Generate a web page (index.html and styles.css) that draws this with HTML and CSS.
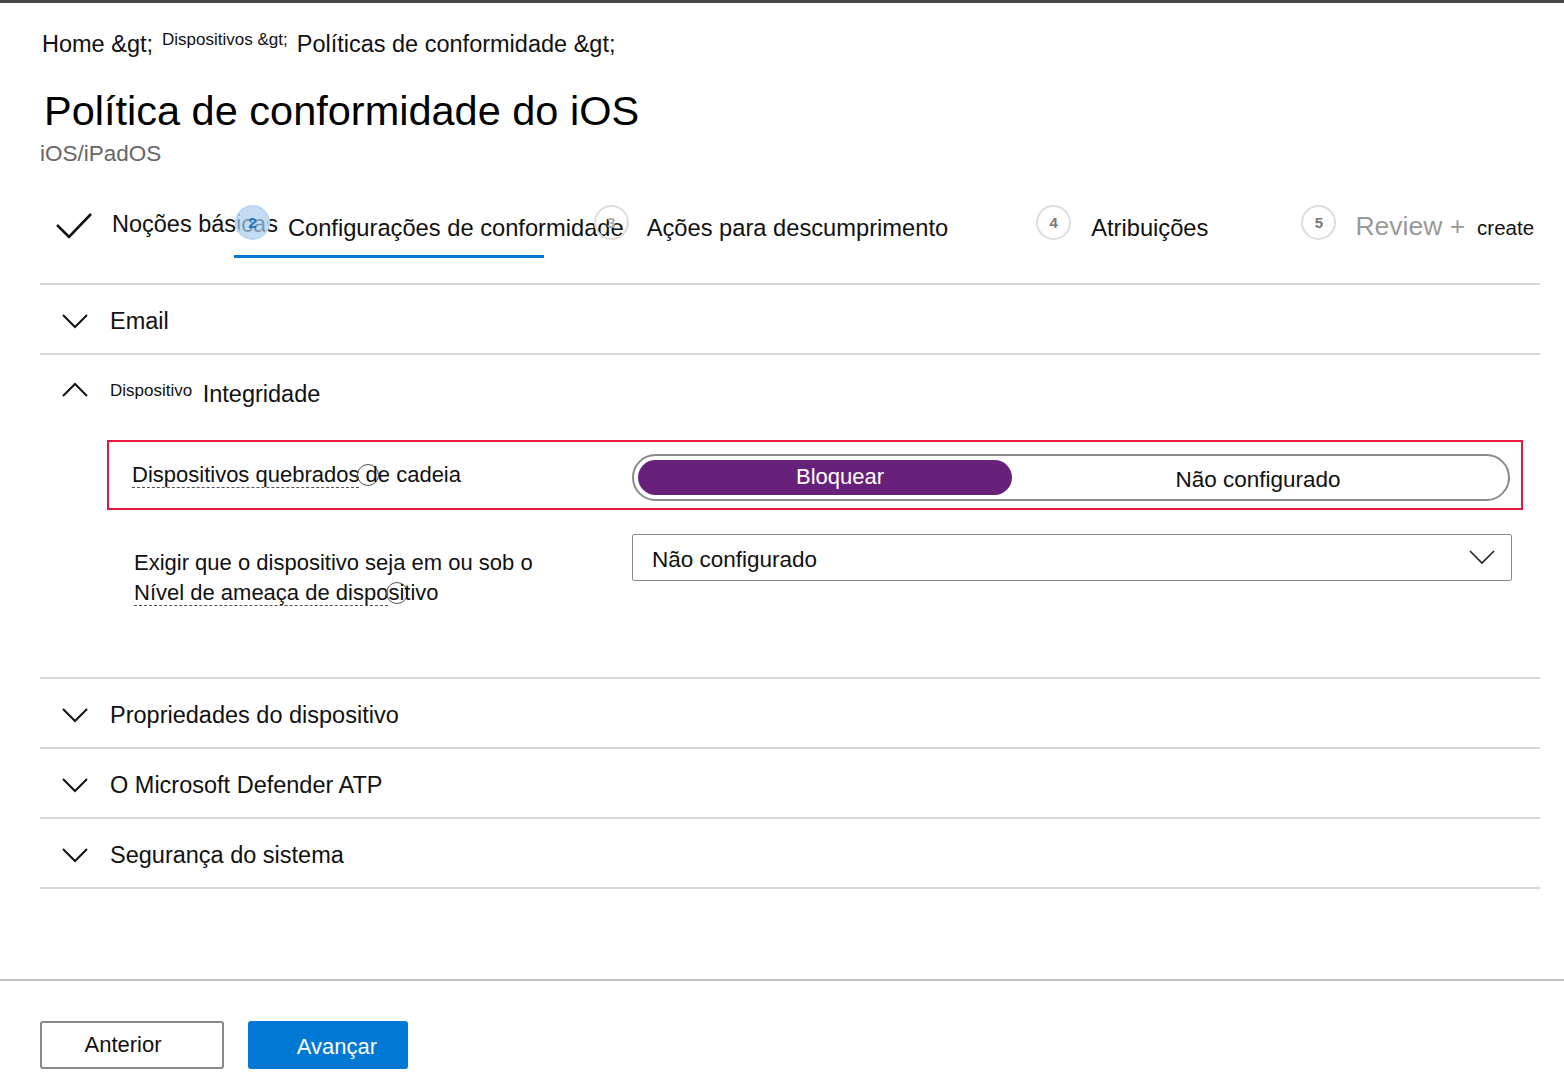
FILE: index.html
```html
<!DOCTYPE html>
<html lang="pt">
<head>
<meta charset="utf-8">
<title>Política de conformidade do iOS</title>
<link rel="stylesheet" href="styles.css">
</head>
<body>
<div class="page">
  <nav class="breadcrumb">
    <span class="crumb">Home &amp;gt;</span>
    <span class="crumb small">Dispositivos &amp;gt;</span>
    <span class="crumb">Políticas de conformidade &amp;gt;</span>
  </nav>
  <h1 class="title">Política de conformidade do iOS</h1>
  <div class="subtitle">iOS/iPadOS</div>

  <div class="steps">
    <svg class="check" width="38" height="28" viewBox="0 0 38 28"><polyline points="2,14 14,26 36,3" fill="none" stroke="#111" stroke-width="2.6"/></svg>
    <span class="step-label done">Noções básicas</span>
    <span class="circle active c2">2</span>
    <span class="step-label current">Configurações de conformidade</span>
    <span class="circle c3">3</span>
    <span class="step-label s3">Ações para descumprimento</span>
    <span class="circle c4">4</span>
    <span class="step-label s4">Atribuições</span>
    <span class="circle c5">5</span>
    <span class="step-label review">Review +</span>
    <span class="step-label create">create</span>
  </div>
  <div class="tab-indicator"></div>

  <div class="accordion">
    <div class="acc-row">
      <svg class="chev" width="26" height="16" viewBox="0 0 26 16"><polyline points="1,2 13,14 25,2" fill="none" stroke="#111" stroke-width="2"/></svg>
      <span class="acc-title">Email</span>
    </div>

    <div class="acc-section">
      <div class="acc-row open">
        <svg class="chev" width="26" height="16" viewBox="0 0 26 16"><polyline points="1,14 13,2 25,14" fill="none" stroke="#111" stroke-width="2"/></svg>
        <span class="acc-title"><span class="tiny">Dispositivo</span> Integridade</span>
      </div>
      <div class="settings">
        <div class="setting highlight">
          <div class="setting-label"><span class="dashed">Dispositivos quebrados</span><span class="info"></span> de cadeia</div>
          <div class="toggle">
            <span class="opt on">Bloquear</span>
            <span class="opt off">Não configurado</span>
          </div>
        </div>
        <div class="setting">
          <div class="setting-label two">Exigir que o dispositivo seja em ou sob o<br><span class="dashed">Nível de ameaça de dispo</span><span class="info"></span>sitivo</div>
          <div class="select">
            <span>Não configurado</span>
            <svg width="26" height="16" viewBox="0 0 26 16"><polyline points="1,2 13,14 25,2" fill="none" stroke="#222" stroke-width="1.6"/></svg>
          </div>
        </div>
      </div>
    </div>

    <div class="acc-row">
      <svg class="chev" width="26" height="16" viewBox="0 0 26 16"><polyline points="1,2 13,14 25,2" fill="none" stroke="#111" stroke-width="2"/></svg>
      <span class="acc-title">Propriedades do dispositivo</span>
    </div>
    <div class="acc-row">
      <svg class="chev" width="26" height="16" viewBox="0 0 26 16"><polyline points="1,2 13,14 25,2" fill="none" stroke="#111" stroke-width="2"/></svg>
      <span class="acc-title">O Microsoft Defender ATP</span>
    </div>
    <div class="acc-row">
      <svg class="chev" width="26" height="16" viewBox="0 0 26 16"><polyline points="1,2 13,14 25,2" fill="none" stroke="#111" stroke-width="2"/></svg>
      <span class="acc-title">Segurança do sistema</span>
    </div>
  </div>
</div>

<footer class="footer">
  <button class="btn secondary">Anterior</button>
  <button class="btn primary">Avançar</button>
</footer>
</body>
</html>
```

FILE: styles.css
```css
html, body {
  margin: 0;
  padding: 0;
  background: #fff;
}
body {
  border-top: 3px solid #474747;
  font-family: "Liberation Sans", Arial, sans-serif;
  color: #111;
}
.page {
  padding: 0 24px 0 40px;
}
.breadcrumb {
  display: flex;
  align-items: flex-start;
  gap: 9px;
  padding-top: 28px;
  padding-left: 2px;
  font-size: 23.5px;
  line-height: 26px;
}
.crumb.small {
  font-size: 17px;
  line-height: 18px;
}
.title {
  margin: 30px 0 0 4px;
  font-weight: normal;
  font-size: 41.5px;
  line-height: 48px;
  color: #000;
}
.subtitle {
  margin-top: 6px;
  font-size: 22.5px;
  line-height: 26px;
  color: #666;
}
.steps {
  display: flex;
  align-items: center;
  margin-top: 39px;
  height: 44px;
  font-size: 23.7px;
  white-space: nowrap;
}
.steps > * {
  flex: none;
}
.check {
  margin-left: 15px;
  margin-right: 19px;
  margin-top: -6px;
}
.step-label {
  color: #111;
}
.step-label.done {
  margin-top: -8px;
  font-size: 23.5px;
}
.circle {
  box-sizing: border-box;
  width: 35px;
  height: 35px;
  border-radius: 50%;
  border: 2px solid #ddd;
  color: #777;
  font-size: 15px;
  font-weight: bold;
  display: flex;
  align-items: center;
  justify-content: center;
  margin-top: -12px;
}
.circle.active {
  background: rgba(170, 205, 240, 0.7);
  border-color: #b9d7f3;
  color: #1b6fc2;
}
.c2 { margin-left: -43px; }
.current { margin-left: 18px; }
.c3 { margin-left: -30px; color: #aaa; }
.s3 { margin-left: 18px; }
.c4 { margin-left: 88px; }
.s4 { margin-left: 20px; }
.c5 { margin-left: 93px; }
.review {
  margin-left: 19px;
  color: #999;
  font-size: 26.5px;
  margin-top: -4px;
}
.create {
  margin-left: 12px;
  font-size: 20.5px;
}
.tab-indicator {
  margin-left: 194px;
  width: 310px;
  height: 3px;
  background: #0078d4;
  margin-top: 5px;
}
.accordion {
  margin-top: 25px;
  border-top: 2px solid #d6d6d6;
}
.acc-row {
  display: flex;
  align-items: center;
  height: 70px;
  padding-top: 4px;
  box-sizing: border-box;
  border-bottom: 2px solid #d6d6d6;
}
.acc-section {
  border-bottom: 2px solid #d6d6d6;
}
.acc-section .acc-row {
  border-bottom: none;
  height: 72px;
  align-items: flex-end;
  padding-bottom: 19px;
}
.chev {
  margin-left: 22px;
  margin-right: 22px;
  flex: none;
}
.acc-section .chev {
  margin-bottom: 10px;
}
.acc-title {
  font-size: 23.5px;
  line-height: 28px;
}
.tiny {
  font-size: 17px;
  vertical-align: 6px;
  margin-right: 4px;
}
.settings {
  margin: 13px 17px 0 67px;
  padding-bottom: 67px;
  display: flex;
  flex-direction: column;
  gap: 22px;
}
.setting {
  display: grid;
  grid-template-columns: 523px 1fr;
  align-items: start;
  border: 2px solid transparent;
  padding-right: 11px;
}
.setting.highlight {
  border-color: #e4193f;
  height: 70px;
  box-sizing: border-box;
  align-items: center;
}
.setting-label {
  padding-left: 23px;
  font-size: 22px;
  line-height: 30px;
}
.setting-label.two {
  padding-left: 25px;
  margin-top: 14px;
}
.dashed {
  border-bottom: 1px dashed #555;
}
.info {
  display: inline-block;
  box-sizing: border-box;
  width: 22px;
  height: 22px;
  border-radius: 50%;
  border: 1.5px solid #555;
  vertical-align: -4px;
  margin-left: -2px;
  margin-right: -20px;
}
.toggle {
  box-sizing: border-box;
  height: 47px;
  margin-top: 4px;
  border: 2px solid #8a8a8a;
  border-radius: 24px;
  padding: 4px;
  display: flex;
  align-items: center;
}
.opt {
  font-size: 22px;
  display: flex;
  align-items: center;
  justify-content: center;
  height: 100%;
}
.opt.on {
  width: 374px;
  box-sizing: border-box;
  padding-left: 30px;
  background: #68217a;
  color: #fff;
  border-radius: 18px;
}
.opt.off {
  flex: 1;
  padding-top: 6px;
  box-sizing: border-box;
  font-size: 22.5px;
}
.select {
  box-sizing: border-box;
  height: 47px;
  border: 1px solid #8a8a8a;
  border-radius: 2px;
  display: flex;
  align-items: center;
  justify-content: space-between;
  padding: 4px 16px 0 19px;
  font-size: 22.5px;
  margin-right: -2px;
}
.select svg {
  margin-top: -6px;
}
.footer {
  margin-top: 90px;
  border-top: 2px solid #c0c0c0;
  padding: 40px 0 0 40px;
  display: flex;
  gap: 24px;
}
.btn {
  box-sizing: border-box;
  height: 48px;
  font-family: "Liberation Sans", Arial, sans-serif;
  font-size: 22px;
  border-radius: 3px;
  cursor: pointer;
}
.btn.secondary {
  width: 184px;
  background: #fff;
  border: 2px solid #8a8a8a;
  color: #111;
  padding-right: 24px;
}
.btn.primary {
  width: 160px;
  background: #0078d4;
  border: none;
  color: #fff;
  padding-top: 4px;
  padding-left: 24px;
}
```
